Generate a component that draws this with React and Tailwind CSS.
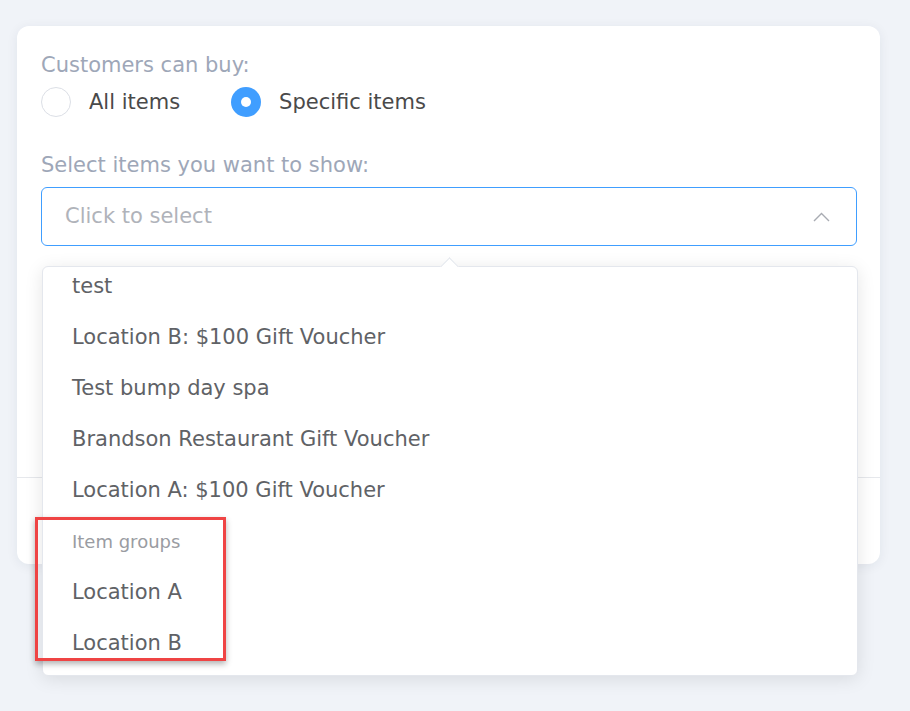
import React from 'react';

const items = [
  'test',
  'Location B: $100 Gift Voucher',
  'Test bump day spa',
  'Brandson Restaurant Gift Voucher',
  'Location A: $100 Gift Voucher',
];

const groups = ['Location A', 'Location B'];

function Radio({ checked, label }) {
  return (
    <label className="flex items-center gap-[18px]">
      {checked ? (
        <span className="w-[30px] h-[30px] rounded-full bg-[#409eff] flex items-center justify-center">
          <span className="w-[10px] h-[10px] rounded-full bg-white"></span>
        </span>
      ) : (
        <span className="w-[30px] h-[30px] rounded-full border border-[#dcdfe6] bg-white"></span>
      )}
      <span className="text-[21px] leading-[30px] text-[#4a4a4a]">{label}</span>
    </label>
  );
}

export default function App() {
  return (
    <div
      className="min-h-screen bg-[#f0f3f8] pt-[26px] pl-[17px]"
      style={{ fontFamily: '"DejaVu Sans", "Liberation Sans", sans-serif' }}
    >
      <div className="w-[863px] h-[538px] bg-white rounded-xl shadow-[0_2px_12px_rgba(30,40,70,0.07)] flex flex-col">
        <div className="flex-1 pt-[24px] px-[24px]">
          {/* Customers can buy */}
          <div className="text-[21px] leading-[30px] text-[#9ea7b8]">Customers can buy:</div>
          <div className="mt-[7px] flex items-center gap-[51px]">
            <Radio label="All items" />
            <Radio checked label="Specific items" />
          </div>

          {/* Select items */}
          <div className="mt-[33px] text-[21px] leading-[30px] text-[#9ea7b8]">Select items you want to show:</div>
          <div className="relative mt-[7px]">
            <div className="h-[59px] w-[816px] rounded-md border-[1.5px] border-[#409eff] flex items-center justify-between pl-[23px] pr-[26px]">
              <span className="text-[21px] text-[#b0b3ba]">Click to select</span>
              <svg width="17" height="10" viewBox="0 0 17 10" fill="none">
                <path d="M1 9 L8.5 1.5 L16 9" stroke="#a8abb2" strokeWidth="1.4" />
              </svg>
            </div>

            {/* Dropdown */}
            <div className="absolute left-[1px] top-[79px] w-[816px] h-[410px] bg-white border border-[#e4e7ed] rounded-[6px] shadow-[0_3px_18px_rgba(0,0,0,0.1)] z-10">
              <div className="absolute -top-[7px] left-[400px] w-[13px] h-[13px] bg-white border-l border-t border-[#e4e7ed] rotate-45"></div>
              <div className="relative h-full overflow-hidden rounded-[6px]">
                <ul className="-mt-[6px]">
                  {items.map((item) => (
                    <li key={item} className="h-[51px] flex items-center px-[29px] text-[21px] text-[#606266]">
                      {item}
                    </li>
                  ))}
                  <li className="h-[51px] flex items-center px-[29px] text-[18px] text-[#9a9ca2]">Item groups</li>
                  {groups.map((g) => (
                    <li key={g} className="h-[51px] flex items-center px-[29px] text-[21px] text-[#606266]">
                      {g}
                    </li>
                  ))}
                </ul>
              </div>
              {/* highlight */}
              <div className="absolute -left-[8px] top-[250px] w-[191px] h-[144px] border-[3px] border-[#ef4444] shadow-[0_3px_6px_rgba(0,0,0,0.3)]"></div>
            </div>
          </div>
        </div>
        <div className="h-[87px] border-t border-[#e6e8ec]"></div>
      </div>
    </div>
  );
}
